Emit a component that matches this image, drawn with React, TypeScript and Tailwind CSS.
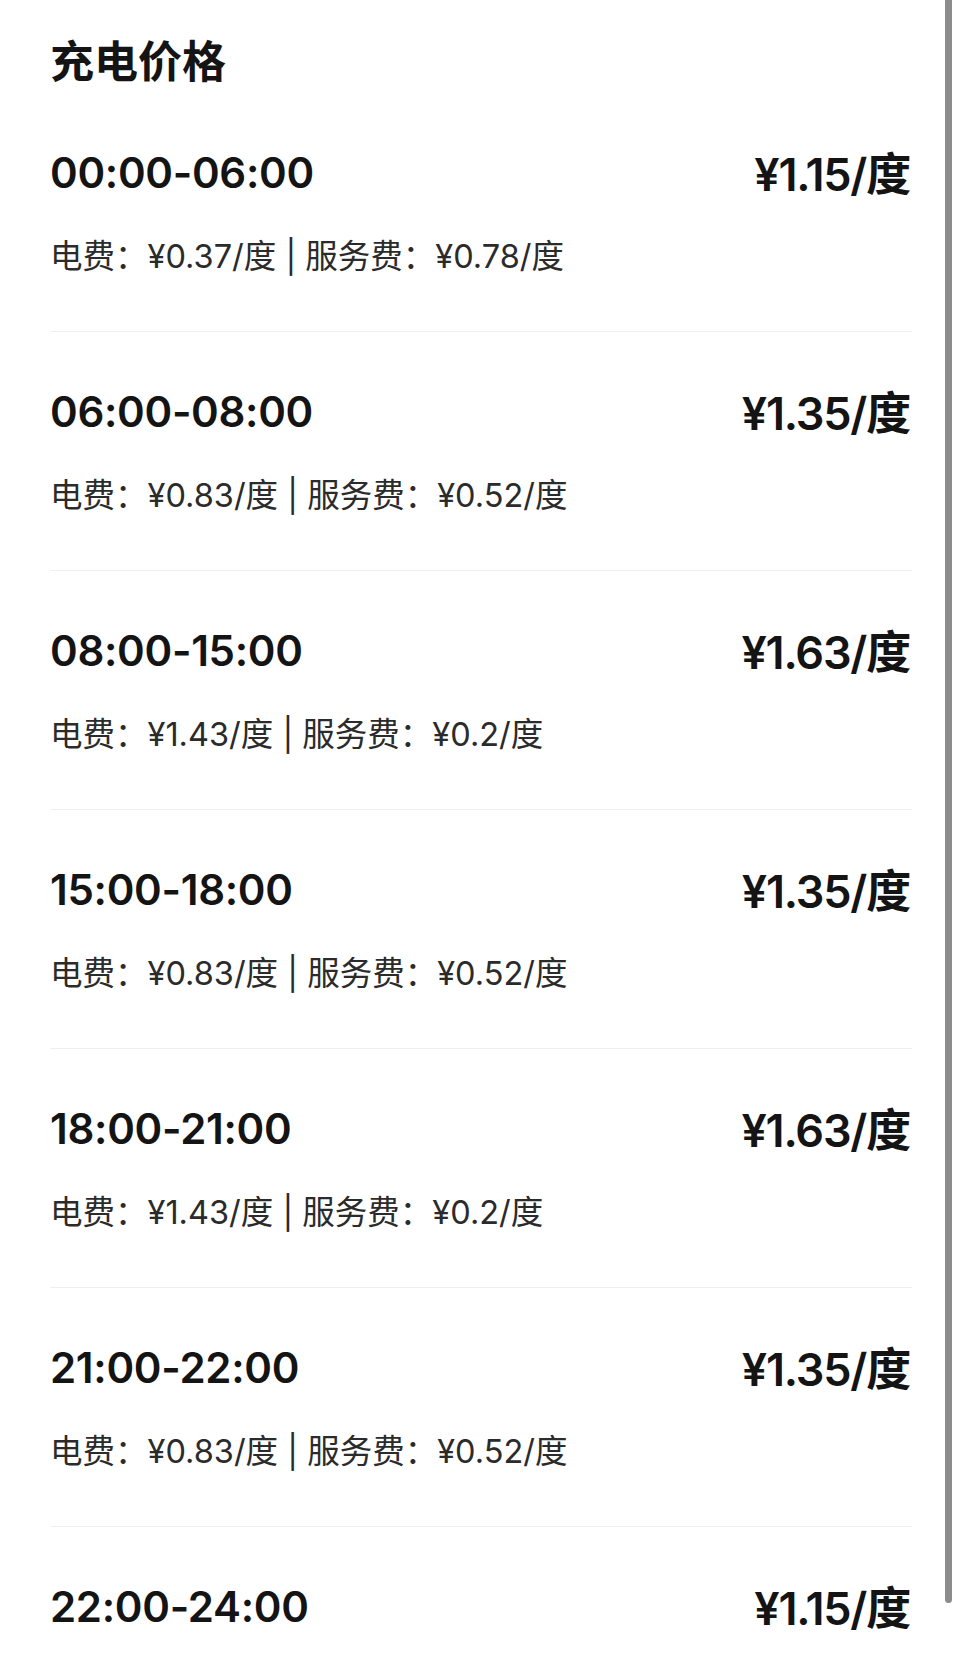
const rows = [
  { time: '00:00-06:00', price: '¥1.15/度', elec: '¥0.37/度', service: '¥0.78/度' },
  { time: '06:00-08:00', price: '¥1.35/度', elec: '¥0.83/度', service: '¥0.52/度' },
  { time: '08:00-15:00', price: '¥1.63/度', elec: '¥1.43/度', service: '¥0.2/度' },
  { time: '15:00-18:00', price: '¥1.35/度', elec: '¥0.83/度', service: '¥0.52/度' },
  { time: '18:00-21:00', price: '¥1.63/度', elec: '¥1.43/度', service: '¥0.2/度' },
  { time: '21:00-22:00', price: '¥1.35/度', elec: '¥0.83/度', service: '¥0.52/度' },
  { time: '22:00-24:00', price: '¥1.15/度', elec: '¥0.37/度', service: '¥0.78/度' },
];

const font = { fontFamily: 'Inter, "Noto Sans CJK SC", sans-serif' };

export default function App() {
  return (
    <div className="relative h-[1660px] overflow-hidden bg-white text-[#141414]" style={font}>
      {/* Scrollbar */}
      <div className="absolute left-[945px] top-0 h-[1603px] w-[7px] rounded-b-full bg-[#8c8c8c]" />

      <div className="pl-[50px] pr-[48px]">
        {/* Title */}
        <h1 className="pt-[34px] text-[44px] leading-[56px] font-bold">充电价格</h1>

        {/* Price rows */}
        <div className="mt-[3px]">
          {rows.map((r) => (
            <div key={r.time} className="border-b border-[#efefef] pt-[51px] pb-[52px]">
              <div className="flex h-[56px] items-center justify-between">
                <span className="text-[42px] font-semibold tracking-[-0.3px]">{r.time}</span>
                <span className="mr-[2px] mt-[6px] text-[45px] font-semibold tracking-[-1.2px]">{r.price}</span>
              </div>
              <p className="mt-[35px] text-[32.5px] leading-[44px] text-[#2b2b2b]">
                电费：{r.elec} | 服务费：{r.service}
              </p>
            </div>
          ))}
        </div>
      </div>
    </div>
  );
}
